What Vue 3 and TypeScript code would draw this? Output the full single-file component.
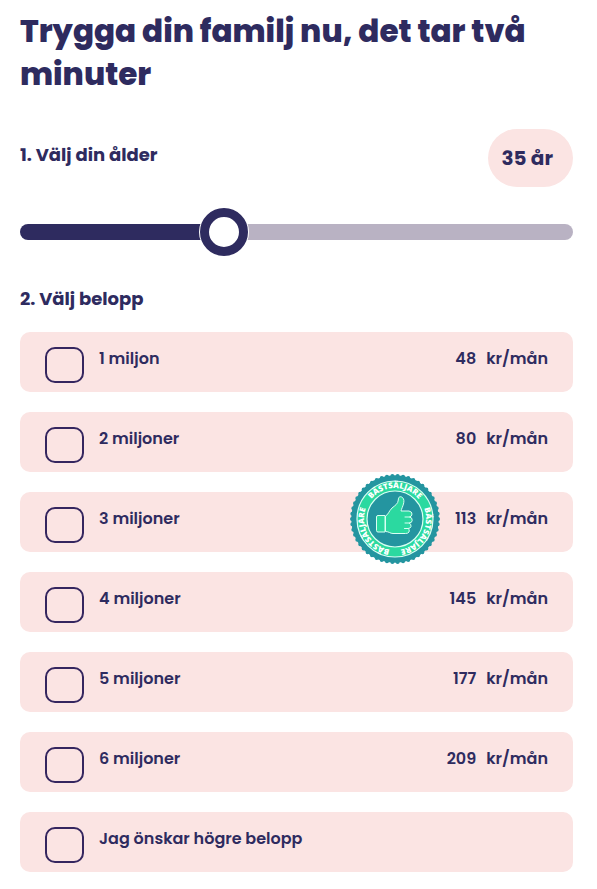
<script setup lang="ts">
import { computed, ref } from 'vue'

interface Amount {
  id: number
  label: string
  price?: number
  bestseller?: boolean
}

const minAge = 20
const maxAge = 62
const age = ref<number>(35)
const selected = ref<number[]>([])

const amounts: Amount[] = [
  { id: 1, label: '1 miljon', price: 48 },
  { id: 2, label: '2 miljoner', price: 80 },
  { id: 3, label: '3 miljoner', price: 113, bestseller: true },
  { id: 4, label: '4 miljoner', price: 145 },
  { id: 5, label: '5 miljoner', price: 177 },
  { id: 6, label: '6 miljoner', price: 209 },
  { id: 7, label: 'Jag önskar högre belopp' },
]

const fill = computed(() => `${((age.value - minAge) / (maxAge - minAge)) * 100}%`)
</script>

<template>
  <main class="calculator">
    <h1>Trygga din familj nu, det tar två minuter</h1>

    <div class="age-row">
      <label class="step" for="age">1. Välj din ålder</label>
      <output class="age" for="age">{{ age }} år</output>
    </div>
    <input
      id="age"
      v-model.number="age"
      class="slider"
      type="range"
      :min="minAge"
      :max="maxAge"
      :style="{ '--fill': fill }"
    />

    <h2 class="step">2. Välj belopp</h2>
    <ul class="amounts">
      <li v-for="item in amounts" :key="item.id" class="amount">
        <input :id="`amount-${item.id}`" v-model="selected" class="box" type="checkbox" :value="item.id" />
        <label class="name" :for="`amount-${item.id}`">{{ item.label }}</label>
        <span v-if="item.price" class="price">
          <span>{{ item.price }}</span>
          <span>kr/mån</span>
        </span>
        <svg v-if="item.bestseller" class="badge" viewBox="0 0 90 90" aria-hidden="true">
          <defs>
            <path id="ring" d="M45 76 A31 31 0 0 1 45 14 A31 31 0 0 1 45 76" />
          </defs>
          <circle cx="45" cy="45" r="43.8" fill="#2495a0" />
          <circle
            cx="45" cy="45" r="43" fill="none" stroke="#2495a0" stroke-width="4"
            stroke-linecap="round" pathLength="200" stroke-dasharray="0 4"
          />
          <circle cx="45" cy="45" r="38" fill="#2bd9a0" stroke="#d9fff3" stroke-width="1.2" />
          <circle cx="45" cy="45" r="28" fill="#2495a0" stroke="#d9fff3" stroke-width="1.2" />
          <g class="badge-text">
            <text><textPath href="#ring" startOffset="50%">BÄSTSÄLJARE</textPath></text>
            <text transform="rotate(120 45 45)"><textPath href="#ring" startOffset="50%">BÄSTSÄLJARE</textPath></text>
            <text transform="rotate(240 45 45)"><textPath href="#ring" startOffset="50%">BÄSTSÄLJARE</textPath></text>
          </g>
          <g fill="#2bd9a0" stroke="#d9fff3" stroke-width="1" stroke-linejoin="round">
            <path d="M28 41.5H35V58H28Q26.500 58 26.500 56.500V43Q26.500 41.500 28 41.500Z" />
            <path d="M35.500 42C38 41 39 37 42 34C45 31.500 48 30 48.300 26C48.300 22.500 50.500 22 52.500 23.500C56 27 52 33 51 37H59Q62 37.500 62 40Q62 42.500 59.500 43Q62.500 43.500 62.200 46.500Q62 49 59 49Q61.500 50 61 52.500Q60.500 54.500 58 54.500Q60 55.500 59 58Q58 59.500 55.500 59.500H43C40 59.500 39 57.500 35.500 57.500Z" />
            <path d="M55 43H59.500M55 49H59M54.500 54.500H58" fill="none" stroke-linecap="round" />
          </g>
        </svg>
      </li>
    </ul>
  </main>
</template>

<style>
body {
  background: #fff;
}
</style>

<style scoped>
.calculator {
  padding: 10px 24px 16px 20px;
  color: #2e2b5f;
  font-family: Poppins, Inter, sans-serif;
}

h1 {
  margin: 0;
  font-size: 31px;
  line-height: 43px;
  font-weight: 800;
}

.age-row {
  display: flex;
  justify-content: space-between;
  align-items: flex-start;
  margin-top: 33px;
}

.step {
  margin: 0;
  font-size: 18px;
  line-height: 24px;
  font-weight: 700;
}

.age-row .step {
  padding-top: 14px;
}

.age {
  padding: 16px 20px 16px 14px;
  border-radius: 29px;
  background: #fbe4e3;
  font-size: 20px;
  line-height: 26px;
  font-weight: 700;
}

.slider {
  display: block;
  appearance: none;
  width: 100%;
  height: 48px;
  margin: 21px 0 31px;
  background: none;
  cursor: pointer;
}

.slider::-webkit-slider-runnable-track {
  height: 16px;
  border-radius: 8px;
  background: linear-gradient(to right, #2e2b5f var(--fill), #b9b2c3 var(--fill));
}

.slider::-webkit-slider-thumb {
  appearance: none;
  box-sizing: border-box;
  width: 48px;
  height: 48px;
  margin-top: -16px;
  border: 9px solid #2e2b5f;
  border-radius: 50%;
  background: #fff;
  box-shadow: 0 0 0 1px #fff;
}

.amounts {
  display: grid;
  gap: 20px;
  margin: 21px 0 0;
  padding: 0;
  list-style: none;
}

.amount {
  position: relative;
  display: flex;
  align-items: flex-start;
  min-height: 60px;
  box-sizing: border-box;
  padding: 15px 25px 9px;
  border-radius: 10px;
  background: #fbe4e3;
  font-size: 16px;
  line-height: 24px;
  font-weight: 600;
}

.box {
  appearance: none;
  flex: none;
  box-sizing: border-box;
  width: 39px;
  height: 36px;
  margin: 0 15px 0 0;
  border: 2px solid #35265f;
  border-radius: 10px;
  cursor: pointer;
}

.box:checked {
  background: #2e2b5f;
}

.name {
  flex: 1;
}

.price {
  display: flex;
  gap: 10px;
}

.badge {
  position: absolute;
  top: -18px;
  right: 133px;
  width: 90px;
  height: 90px;
}

.badge-text {
  fill: #fff;
  font-family: "Open Sans", sans-serif;
  font-size: 8px;
  font-weight: 800;
  text-anchor: middle;
}
</style>
